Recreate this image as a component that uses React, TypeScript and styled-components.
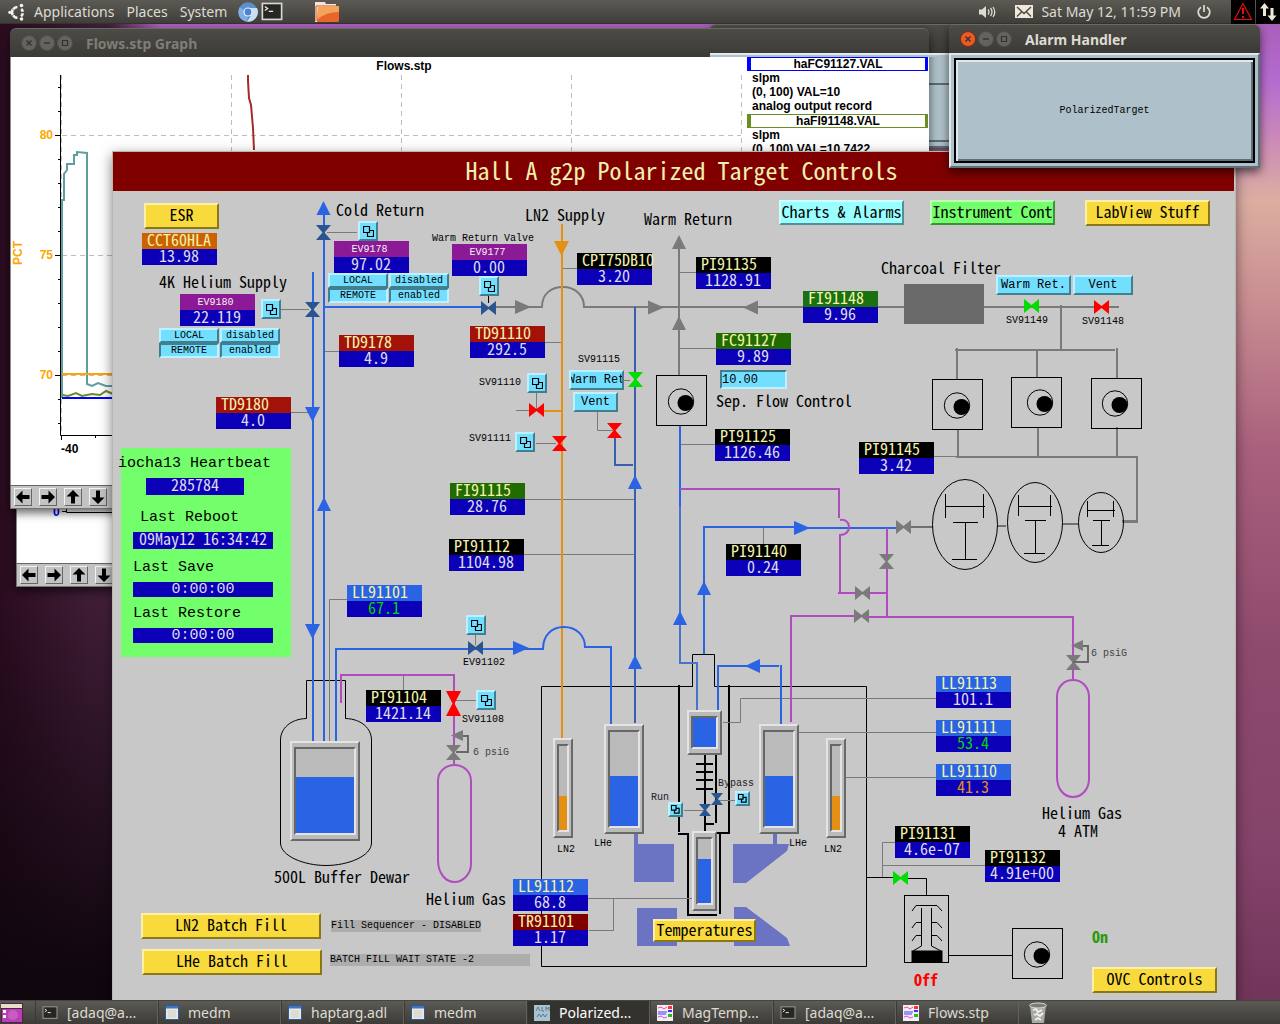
import React from "react";
import styled, { createGlobalStyle, css } from "styled-components";

/* ---------- palette and type ---------- */

const C = {
  face: "#c8c8c8",
  blue: "#2a63e4",
  steel: "#3a5fb0",
  mid: "#4a72cc",
  navy: "#2a5590",
  gray: "#7a7a7a",
  orange: "#e39014",
  purple: "#b04cc0",
  red: "#ff0000",
  green: "#00dd00",
  value: "#0b00b8",
  magnet: "#6b74c2",
};

const tall = `"Noto Sans Mono CJK JP", "Liberation Mono", monospace`;
const mono = `"Liberation Mono", monospace`;
const ui = `"Noto Sans", "Open Sans", sans-serif`;
const sans = `"Liberation Sans", Arial, sans-serif`;

/* The display's widgets are listed in screen coordinates. */
const ORIGIN_X = 113;
const ORIGIN_Y = 191;

const GlobalStyle = createGlobalStyle`
  html, body, #root { height: 100%; }
  body { margin: 0; overflow: hidden; }
  *, *::before, *::after { box-sizing: border-box; }
  button, input { margin: 0; padding: 0; border: 0; font: inherit; color: inherit; background: none; }
`;

/* ---------- desktop ---------- */

const Desktop = styled.div`
  display: flex;
  flex-direction: column;
  height: 100vh;
  min-height: 1024px;
  font-family: ${ui};
  font-size: 14px;
  background:
    linear-gradient(180deg, #0f060e00 600px, #0f060e 980px) 0 0 / 140px 100% no-repeat,
    linear-gradient(90deg, #2a0c1f 0, #43203a 110px, #43203a00 160px),
    linear-gradient(180deg, #a35bb0 0, #b46bd0 80px, #cf90b4 150px, #dcaea0 200px, #c98e92 300px, #a9607d 450px, #8e4a6d 650px, #84436a 850px, #6f3358 1024px);
`;

const Panel = styled.header`
  display: flex;
  align-items: center;
  flex: none;
  height: 24px;
  padding-left: 8px;
  color: #dfdbd2;
  background: linear-gradient(#5b5a54, #3f3e3a);
  border-bottom: 1px solid #33322e;
  position: relative;
  z-index: 5;
`;

const Menus = styled.nav`
  display: flex;
  padding: 0 5px 0 2px;
`;

const MenuButton = styled.button`
  padding: 0 6px;
  line-height: 22px;
  white-space: nowrap;
`;

const IconButton = styled.button<{ $ml?: number; $w: number; $dark?: boolean }>`
  display: flex;
  align-items: center;
  justify-content: center;
  width: ${(p) => p.$w}px;
  height: 24px;
  margin-left: ${(p) => p.$ml ?? 0}px;
  background: ${(p) => (p.$dark ? "#000" : "none")};
`;

const Tray = styled.div`
  display: flex;
  align-items: center;
  margin-left: auto;
`;

const Clock = styled.time`
  margin-left: 8px;
  white-space: nowrap;
  font-size: 14px;
`;

const Space = styled.main`
  position: relative;
  flex: 1;
`;

const Taskbar = styled.footer`
  display: flex;
  flex: none;
  height: 24px;
  color: #dfdbd2;
  background: linear-gradient(#5b5a54, #3c3b37);
  border-top: 1px solid #45443f;
  position: relative;
  z-index: 5;
`;

const Task = styled.button<{ $active?: boolean }>`
  display: flex;
  align-items: center;
  gap: 9px;
  width: 123px;
  padding-left: 6px;
  border-left: 1px solid #3a3935;
  border-right: 1px solid #62615b;
  line-height: 22px;
  white-space: nowrap;
  ${(p) => p.$active && css`background: #33322e; color: #fff;`}
`;

const Grip = styled.span`
  width: 11px;
`;

/* ---------- windows ---------- */

const Window = styled.section<{ $x: number; $y: number; $w: number; $h: number }>`
  position: absolute;
  left: ${(p) => p.$x}px;
  top: ${(p) => p.$y - 24}px;
  width: ${(p) => p.$w}px;
  height: ${(p) => p.$h}px;
  display: flex;
  flex-direction: column;
  border-radius: 6px 6px 0 0;
  box-shadow: 0 4px 10px rgba(0, 0, 0, 0.6);
`;

const TitleBar = styled.div<{ $active?: boolean }>`
  display: flex;
  align-items: center;
  flex: none;
  gap: 2px;
  height: 29px;
  padding-left: 11px;
  border-radius: 6px 6px 0 0;
  border-top: 1px solid #6a6963;
  background: linear-gradient(#4c4b45, #3b3a36);
  color: ${(p) => (p.$active ? "#dfdbd2" : "#807d78")};
  font-weight: 700;
  font-size: 14px;
  white-space: nowrap;
`;

const WinTitle = styled.h2`
  margin: 0 0 0 11px;
  font: inherit;
  font-weight: 700;
`;

const WinDot = styled.button<{ $close?: boolean }>`
  display: flex;
  width: 16px;
  height: 16px;
  border-radius: 8px;
  color: #33322e;
  background: ${(p) => (p.$close ? "#e95a25" : "#65635d")};
  border: 1px solid ${(p) => (p.$close ? "#7a2c10" : "#504e49")};
`;

const GraphBody = styled.div`
  display: flex;
  flex: 1;
  min-height: 0;
  overflow: hidden;
  background: #fff;
  border-left: 1px solid #8d8b87;
  font: bold 12px ${sans};
  color: #000;
`;

const GraphPlot = styled.div`
  flex: 1;
  min-width: 0;
`;

const Legend = styled.div`
  width: 182px;
  padding-right: 1px;
`;

const LegendName = styled.div<{ $c: string }>`
  height: 14px;
  line-height: 12px;
  text-align: center;
  border: solid ${(p) => p.$c};
  border-width: 1px 3px 1px 4px;
`;

const LegendText = styled.p`
  margin: 0 0 1px;
  padding: 0 0 0 5px;
  line-height: 14px;
  white-space: nowrap;
`;

const ArrowBar = styled.div`
  display: flex;
  align-items: center;
  flex: none;
  gap: 7px;
  height: 24px;
  padding-left: 3px;
  background: #c3c3c3;
  border: 1px solid #77756f;
  border-top-color: #666;
`;

const ArrowButton = styled.button`
  width: 18px;
  height: 18px;
  border: 1px solid;
  border-color: #f4f4f4 #666 #666 #f4f4f4;
  display: flex;
  align-items: center;
  justify-content: center;
`;

const MotifBody = styled.div`
  flex: 1;
  display: flex;
  padding: 4px;
  background: #aec0c9;
  border: 2px solid;
  border-color: #dfe8ec #5f6f78 #5f6f78 #dfe8ec;
`;

const MotifPane = styled.div`
  flex: 1;
  margin-top: 24px;
  border: 2px solid;
  border-color: #5f6a70 #5f6a70 #5f6a70 #dfe8ec;
`;

/* Top edge of the rear alarm window, repainted over the graph's title bar. */
const StrayEdge = styled.div`
  position: absolute;
  left: 710px;
  top: 29px;
  width: 240px;
  height: 4px;
  background: #aec0c9;
  border-top: 2px solid #dfe8ec;
`;

const AlarmButton = styled.button`
  flex: 1;
  margin: -1px;
  border: 2px solid #000;
  outline: 0;
  font: 10px ${mono};
  color: #000;
  box-shadow: inset 2px 2px 0 #dfe8ec, inset -2px -2px 0 #5f6f78;
`;

/* ---------- target display ---------- */

const MedmWindow = styled.section`
  position: absolute;
  left: 112px;
  top: 127px;
  width: 1124px;
  bottom: 0;
  display: flex;
  flex-direction: column;
  background: ${C.face};
  border: 1px solid #b9b6b2;
  border-bottom: 0;
  box-shadow: 0 4px 12px rgba(0, 0, 0, 0.5);
`;

const Banner = styled.h1`
  flex: none;
  height: 39px;
  margin: 0 1px 0 0;
  padding-left: 16px;
  text-align: center;
  font: 24px/36px ${tall};
  color: #f0f0b0;
  background: #800000;
`;

const Canvas = styled.div`
  position: relative;
  flex: 1;
`;

const Drawing = styled.svg`
  display: block;
  width: 1122px;
  height: 809px;
`;

const place = css<{ $x: number; $y: number }>`
  position: absolute;
  left: ${(p) => p.$x - ORIGIN_X}px;
  top: ${(p) => p.$y - ORIGIN_Y}px;
`;

const TagBox = styled.div`
  ${place}
  width: 75px;
  white-space: nowrap;
  font: 16px/13px ${tall};
`;

const TagName = styled.div<{ $bg: string; $small?: boolean }>`
  height: 16px;
  padding-left: 5px;
  background: ${(p) => p.$bg};
  color: #f2f2ac;
  ${(p) => p.$small && css`
    padding-left: 0;
    padding-right: 4px;
    text-align: center;
    color: #f4f4f4;
    font: 10px/17px ${mono};
  `}
`;

const TagValue = styled.output<{ $c?: string }>`
  display: block;
  height: 16px;
  padding-right: 1px;
  text-align: center;
  background: ${C.value};
  color: ${(p) => p.$c ?? "#dcdce8"};
`;

type LabelSize = "small" | "large" | "state";
const labelFont: Record<LabelSize, string> = {
  small: `10px/18px ${mono}`,
  large: `16px/12px ${tall}`,
  state: `bold 16px/12px ${tall}`,
};

const Label = styled.span<{ $size: LabelSize; $c?: string }>`
  ${place}
  white-space: nowrap;
  font: ${(p) => labelFont[p.$size]};
  color: ${(p) => p.$c ?? "#000"};
`;

const tones = {
  yellow: ["#f9da3c", "#fdf0a6", "#8a7718"],
  aqua: ["#99ffff", "#ccffff", "#558f8f"],
  lime: ["#73ff6b", "#b8ffb4", "#3f8f3a"],
  sky: ["#73dfff", "#bdf1ff", "#417f90"],
};
type Tone = keyof typeof tones;

const raised = css<{ $tone: Tone; $pressed?: boolean }>`
  background: ${(p) => tones[p.$tone][0]};
  border: 2px solid;
  border-color: ${(p) => {
    const [, light, dark] = tones[p.$tone];
    return p.$pressed ? `${dark} ${light} ${light} ${dark}` : `${light} ${dark} ${dark} ${light}`;
  }};
`;

const PushButton = styled.button<{ $x: number; $y: number; $w: number; $h: number; $tone: Tone; $mid?: boolean }>`
  ${place}
  ${raised}
  display: flex;
  align-items: center;
  justify-content: center;
  width: ${(p) => p.$w}px;
  height: ${(p) => p.$h}px;
  overflow: hidden;
  white-space: nowrap;
  color: #000;
  ${(p) => (p.$mid
    ? css`font: 12px/16px ${mono};`
    : css`padding-bottom: 4px; font: 16px/16px ${tall};`)}
`;

const RelatedButton = styled(PushButton)`
  padding: 0;
`;

const ChoiceGroup = styled.div`
  ${place}
  display: grid;
  grid-template-columns: 60px 60px;
  column-gap: 1px;
`;

const Choice = styled.button`
  ${raised}
  height: 15px;
  font: 10px/11px ${mono};
  color: #000;
`;

const Setpoint = styled.input`
  ${place}
  ${raised}
  width: 67px;
  height: 19px;
  font: 12px/14px ${mono};
`;

const StatusText = styled.output<{ $w: number }>`
  ${place}
  width: ${(p) => p.$w}px;
  height: 12px;
  font: 10px/11px ${mono};
  white-space: nowrap;
  background: #adadad;
  color: #000;
`;

const MeterFrame = styled.div<{ $x: number; $y: number; $w: number; $h: number }>`
  ${place}
  display: flex;
  width: ${(p) => p.$w}px;
  height: ${(p) => p.$h}px;
  padding: 4px 2px;
  background: #bababa;
  border: 2px solid;
  border-color: #e4e4e4 #696969 #696969 #e4e4e4;
`;

const MeterWell = styled.div`
  display: flex;
  align-items: flex-end;
  flex: 1;
  background: #bababa;
  border: 2px solid;
  border-color: #666 #e4e4e4 #e4e4e4 #666;
`;

const MeterFill = styled.div<{ $c: string }>`
  width: 100%;
  background: ${(p) => p.$c};
`;

const Heartbeat = styled.section`
  ${place}
  display: flex;
  flex-direction: column;
  align-items: flex-start;
  width: 170px;
  height: 209px;
  padding: 7px 12px;
  background: #73ff6b;
  color: #000;
  font: 15px/18px ${mono};
  white-space: nowrap;
`;

const BeatLabel = styled.span<{ $ml?: number; $mt?: number }>`
  margin-left: ${(p) => p.$ml ?? 0}px;
  margin-top: ${(p) => p.$mt ?? 0}px;
`;

const BeatValue = styled.output<{ $short?: boolean; $tall?: boolean }>`
  width: ${(p) => (p.$short ? 98 : 140)}px;
  height: ${(p) => (p.$tall ? 17 : 15)}px;
  margin-left: ${(p) => (p.$short ? 13 : 0)}px;
  margin-top: 5px;
  text-align: center;
  color: #dcdce8;
  background: ${C.value};
  font: ${(p) => (p.$tall ? `16px/13px ${tall}` : `15px/15px ${mono}`)};
`;

/* ---------- data ---------- */

const MAROON = "#a31208";
const GREEN = "#216c00";
const VIOLET = "#8c1a96";

type TagData = { x: number; y: number; name: string; value: string; bg: string; small?: boolean; c?: string };
const tags: TagData[] = [
  { x: 142, y: 233, name: "CCT60HLA", value: "13.98", bg: "#cd6100" },
  { x: 334, y: 241, name: "EV9178", value: "97.02", bg: VIOLET, small: true },
  { x: 180, y: 294, name: "EV9180", value: "22.119", bg: VIOLET, small: true },
  { x: 452, y: 244, name: "EV9177", value: "0.00", bg: VIOLET, small: true },
  { x: 339, y: 335, name: "TD9178", value: "4.9", bg: MAROON },
  { x: 216, y: 397, name: "TD9180", value: "4.0", bg: MAROON },
  { x: 470, y: 326, name: "TD91110", value: "292.5", bg: MAROON },
  { x: 577, y: 253, name: "CPI75DB10", value: "3.20", bg: "#000" },
  { x: 696, y: 257, name: "PI91135", value: "1128.91", bg: "#000" },
  { x: 803, y: 291, name: "FI91148", value: "9.96", bg: "#1b7010" },
  { x: 716, y: 333, name: "FC91127", value: "9.89", bg: GREEN },
  { x: 715, y: 429, name: "PI91125", value: "1126.46", bg: "#000" },
  { x: 450, y: 483, name: "FI91115", value: "28.76", bg: GREEN },
  { x: 449, y: 539, name: "PI91112", value: "1104.98", bg: "#000" },
  { x: 726, y: 544, name: "PI91140", value: "0.24", bg: "#000" },
  { x: 859, y: 442, name: "PI91145", value: "3.42", bg: "#000" },
  { x: 347, y: 585, name: "LL91101", value: "67.1", bg: C.blue, c: "#00d800" },
  { x: 366, y: 690, name: "PI91104", value: "1421.14", bg: "#000" },
  { x: 936, y: 676, name: "LL91113", value: "101.1", bg: C.blue },
  { x: 936, y: 720, name: "LL91111", value: "53.4", bg: C.blue, c: "#00d800" },
  { x: 936, y: 764, name: "LL91110", value: "41.3", bg: C.blue, c: C.orange },
  { x: 513, y: 879, name: "LL91112", value: "68.8", bg: C.blue },
  { x: 513, y: 914, name: "TR91101", value: "1.17", bg: "#800000" },
  { x: 895, y: 826, name: "PI91131", value: "4.6e-07", bg: "#000" },
  { x: 985, y: 850, name: "PI91132", value: "4.91e+00", bg: "#000" },
];

type LabelData = [number, number, string, LabelSize, string?];
const labels: LabelData[] = [
  [336, 203, "Cold Return", "large"],
  [159, 275, "4K Helium Supply", "large"],
  [525, 208, "LN2 Supply", "large"],
  [644, 212, "Warm Return", "large"],
  [881, 261, "Charcoal Filter", "large"],
  [716, 394, "Sep. Flow Control", "large"],
  [274, 870, "500L Buffer Dewar", "large"],
  [426, 892, "Helium Gas", "large"],
  [1042, 806, "Helium Gas", "large"],
  [1058, 824, "4 ATM", "large"],
  [432, 230, "Warm Return Valve", "small"],
  [578, 351, "SV91115", "small"],
  [479, 374, "SV91110", "small"],
  [469, 430, "SV91111", "small"],
  [463, 654, "EV91102", "small"],
  [462, 711, "SV91108", "small"],
  [1006, 312, "SV91149", "small"],
  [1082, 313, "SV91148", "small"],
  [473, 744, "6 psiG", "small", "#444"],
  [1091, 645, "6 psiG", "small", "#444"],
  [651, 789, "Run", "small", "#222"],
  [718, 775, "Bypass", "small", "#222"],
  [594, 835, "LHe", "small"],
  [557, 841, "LN2", "small"],
  [789, 835, "LHe", "small"],
  [824, 841, "LN2", "small"],
  [914, 973, "Off", "state", "#ff0000"],
  [1092, 930, "On", "state", "#2b9a0b"],
];

type ButtonData = { x: number; y: number; w: number; h: number; text: string; tone: Tone; mid?: boolean };
const buttons: ButtonData[] = [
  { x: 144, y: 203, w: 75, h: 26, text: "ESR", tone: "yellow" },
  { x: 779, y: 200, w: 125, h: 25, text: "Charts & Alarms", tone: "aqua" },
  { x: 930, y: 200, w: 125, h: 25, text: "Instrument Cont", tone: "lime" },
  { x: 1085, y: 200, w: 125, h: 26, text: "LabView Stuff", tone: "yellow" },
  { x: 141, y: 913, w: 180, h: 26, text: "LN2 Batch Fill", tone: "yellow" },
  { x: 142, y: 949, w: 180, h: 26, text: "LHe Batch Fill", tone: "yellow" },
  { x: 653, y: 919, w: 103, h: 23, text: "Temperatures", tone: "yellow" },
  { x: 1092, y: 967, w: 125, h: 26, text: "OVC Controls", tone: "yellow" },
  { x: 996, y: 275, w: 75, h: 20, text: "Warm Ret.", tone: "sky", mid: true },
  { x: 1073, y: 275, w: 60, h: 20, text: "Vent", tone: "sky", mid: true },
  { x: 569, y: 370, w: 55, h: 20, text: "Warm Ret", tone: "sky", mid: true },
  { x: 573, y: 392, w: 45, h: 20, text: "Vent", tone: "sky", mid: true },
];

const related: [number, number, number, string][] = [
  [358, 221, 20, "EV9178 details"],
  [261, 299, 20, "EV9180 details"],
  [479, 276, 20, "EV9177 details"],
  [527, 373, 20, "SV91110 details"],
  [515, 432, 20, "SV91111 details"],
  [466, 615, 20, "EV91102 details"],
  [476, 690, 20, "SV91108 details"],
  [668, 802, 15, "Run valve details"],
  [735, 791, 15, "Bypass valve details"],
];

type MeterData = { x: number; y: number; w: number; h: number; level: number; c: string; name: string };
const meters: MeterData[] = [
  { x: 290, y: 741, w: 70, h: 100, level: 67, c: C.blue, name: "Buffer dewar" },
  { x: 553, y: 738, w: 20, h: 100, level: 41, c: C.orange, name: "LN2 left" },
  { x: 604, y: 724, w: 40, h: 110, level: 53, c: C.blue, name: "LHe left" },
  { x: 687, y: 710, w: 35, h: 45, level: 100, c: C.blue, name: "Separator" },
  { x: 759, y: 724, w: 40, h: 110, level: 53, c: C.blue, name: "LHe right" },
  { x: 826, y: 738, w: 20, h: 100, level: 41, c: C.orange, name: "LN2 right" },
  { x: 692, y: 831, w: 25, h: 80, level: 69, c: C.blue, name: "Nose" },
];

/* ---------- drawing primitives ---------- */

type Pt = { x: number; y: number };
const Wire = ({ d, c = C.gray, w = 1 }: { d: string; c?: string; w?: number }) => (
  <path d={d} fill="none" stroke={c} strokeWidth={w} />
);
/* Valve bodies: x,y is the top-left corner of the symbol. */
const ValveH = ({ x, y, c = C.gray }: Pt & { c?: string }) => (
  <path d={`M${x} ${y}L${x + 7.5} ${y + 6}L${x + 15} ${y}V${y + 14}L${x + 7.5} ${y + 8}L${x} ${y + 14}Z`} fill={c} />
);
const ValveV = ({ x, y, c = C.gray, w = 15, h = 15 }: Pt & { c?: string; w?: number; h?: number }) => (
  <path
    d={`M${x} ${y}H${x + w}L${x + w / 2 + 1} ${y + h / 2}L${x + w} ${y + h}H${x}L${x + w / 2 - 1} ${y + h / 2}Z`}
    fill={c}
  />
);
const Up = ({ x, y, c = C.blue }: Pt & { c?: string }) => <path d={`M${x - 7} ${y + 14}L${x} ${y}L${x + 7} ${y + 14}Z`} fill={c} />;
const Down = ({ x, y, c = C.blue }: Pt & { c?: string }) => <path d={`M${x - 7.5} ${y}H${x + 7.5}L${x} ${y + 15}Z`} fill={c} />;
const Right = ({ x, y, c = C.blue }: Pt & { c?: string }) => <path d={`M${x} ${y - 7}L${x + 16} ${y}L${x} ${y + 7}Z`} fill={c} />;
const Left = ({ x, y, c = C.blue }: Pt & { c?: string }) => <path d={`M${x} ${y}L${x + 15} ${y - 7}V${y + 7}Z`} fill={c} />;

const Pump = ({ x, y, dx = 0, dy = 0 }: Pt & { dx?: number; dy?: number }) => (
  <g>
    <rect x={x + 0.5} y={y + 0.5} width={50} height={50} fill="none" stroke="#000" />
    <circle cx={x + 25 + dx} cy={y + 26.5 + dy} r={12.7} fill="none" stroke="#000" />
    <circle cx={x + 29.5 + dx} cy={y + 28 + dy} r={8} fill="#000" />
  </g>
);

const Diagram = () => (
  <Drawing viewBox={`${ORIGIN_X} ${ORIGIN_Y} 1122 809`} aria-hidden="true">
    {/* magnet coils */}
    <g fill={C.magnet}>
      <path d="M634 834h4v10h-4zM634 844h40v38h-40zM637 908h40v38h-40zM773 834h4v10h-4z" />
      <path d="M733 844H789L787 851L746 883H733ZM734 907H746L787 938L790 946H734Z" />
    </g>

    {/* buffer dewar, cryostat and vacuum space */}
    <Wire c="#000" d="M345.5 718.5V680.5H306.5V718.5C290 719 280.5 729 280.5 740V843C280.5 856 304 865.5 326 865.5S371.5 856 371.5 843V740C371.5 729 362 719 345.5 718.5" />
    <Wire c="#000" d="M692.5 686.5H541.5V966.5H866.5V686.5H714.5M692.5 687V654.5H714.5V686.5" />
    <Wire c="#000" w={2} d="M679 685V832M678 834H688V914M729 685V833H717M720 832V914M687 915H717" />
    <Wire c="#000" w={2} d="M705 755V831M716 755V823M705 824H714M696 764H713M696 772H713M696 780H713M696 789H713" />

    {/* instrument leads */}
    <Wire d="M327 232.5H357M281 309.5H309M325 351.5H339M291 412.5H308M347 599.5H329.5V741M562 268.5H577M545 342.5H561M680 272.5H696M680 348.5H716M680 444.5H715M516 410.5H529M536.5 393V409M536 443.5H556M624 380.5H630M597.5 412V430.5H613M525 499.5H635M523 554.5H635M475.5 635V645M763.5 528V544M934 456.5H957M403.5 675V690M454 700.5H476M723 722.5H740.5V698.5H936M799 732.5H936M846 777.5H936M588 898.5H692M613.5 898V930.5H589M684 810.5H704M717 800.5H735M882.5 877V842.5H895M882 865.5H985" />
    <Wire c="#000" d="M488.5 296V303M866 877.5H893M908 878.5H926.5V895M949 955.5H1012" />

    {/* warm return header */}
    <Wire w={2} d="M496 307H542C542 294 551 287 563 287S584 295 584 307H904M984 307H1119M679 248V376" />
    <Wire w={2} d="M1061 305V350M955 350H1115M957 348V379M1037 350V378M1117 348V378M958 429V457M1038 427V457M1117 427V457M956 457H1137V522" />
    <Wire w={2} c="#707070" d="M911 527H933M997 526H1006M1063 524H1078" />
    <Wire w={3} d="M1122 521.500H1138" />
    <rect x={904} y={284} width={80} height={40} fill="#696969" />

    {/* liquid nitrogen */}
    <Wire c={C.orange} w={2} d="M562 224V738M544 411H562" />

    {/* helium supply and cold return */}
    <Wire c={C.blue} w={2} d="M313 272V741M324 210V741M325 307H481M336 741V649H543C543 636 551 627 564 627S585 636 585 647H611V724" />
    <Wire c={C.steel} w={2} d="M635 307V723M615 437V465H633" />
    <Wire c={C.blue} w={2} d="M680 426V506M704 654V527H794M794 528H896M718 710V666H779M781 665V724" />
    <Wire c={C.mid} w={2} d="M680 506V663H697V710" />

    {/* warm gas */}
    <Wire c={C.purple} w={2} d="M680 489H839V518M840 520C845 519 849 522 849 527S845 535 840 535V592M838 593H856M870 593H887M887 528V554M887 568V617M854 616H791V722M869 617H1073V680M341 703V675H454V764" />
    <Wire c={C.purple} w={2} d="M438 860V781C438 771 446 765 454.500 765S471 771 471 781V864C471 874 463 882 454.500 882S438 874 438 860" />
    <Wire c={C.purple} w={2} d="M1057 777V697C1057 687 1064 680 1073 680S1089 687 1089 697V779C1089 789 1082 797 1073 797S1057 789 1057 777" />

    {/* flow arrows */}
    <Up x={323.5} y={201} />
    <Up x={324} y={497} />
    <Down x={312.5} y={407} />
    <Down x={312.5} y={624} />
    <Down x={561.5} y={241} c={C.orange} />
    <Right x={515} y={307} c={C.gray} />
    <Right x={648} y={307.5} c={C.gray} />
    <Left x={743} y={307.5} c={C.gray} />
    <Up x={679} y={235} c={C.gray} />
    <Up x={679} y={316} c={C.gray} />
    <Up x={635} y={475} />
    <Up x={635} y={655} />
    <Up x={680} y={611} />
    <Up x={704} y={581} />
    <Right x={794} y={528} />
    <Right x={513} y={648} />
    <Left x={745} y={666} />

    {/* valves */}
    <ValveV x={316} y={225} c={C.navy} />
    <ValveV x={305} y={302} c={C.navy} />
    <ValveH x={481} y={301} c={C.navy} />
    <ValveH x={468} y={641} c={C.navy} />
    <ValveV x={699} y={804} w={12} h={12} c={C.navy} />
    <ValveV x={711} y={793} w={12} h={12} c={C.navy} />
    <ValveH x={529} y={403} c={C.red} />
    <ValveV x={552} y={436} c={C.red} />
    <ValveV x={607} y={423} c={C.red} />
    <ValveV x={628} y={372} c={C.green} />
    <ValveH x={1024} y={299} c={C.green} />
    <ValveH x={1094} y={300} c={C.red} />
    <ValveV x={446} y={691} h={25} c={C.red} />
    <ValveH x={893} y={871} c={C.green} />
    <ValveH x={896} y={520} />
    <ValveV x={879} y={554} />
    <ValveH x={855} y={586} />
    <ValveH x={854} y={609} />
    <ValveV x={446} y={745} />
    <ValveV x={1066} y={655} />

    {/* relief regulators */}
    <path d="M451 735.500L463 730V741ZM1071 645.500L1083 640V651Z" fill={C.gray} />
    <Wire c="#696969" w={2} d="M463 736H468V752H456M1083 646H1088V662H1073" />

    {/* pumps */}
    <Pump x={656} y={375} />
    <Pump x={932} y={379} />
    <Pump x={1011} y={377} dx={4} dy={-1} />
    <Pump x={1091} y={378} dx={-1} dy={-1} />
    <Pump x={1012} y={928} />

    {/* roots blowers */}
    <g fill="none" stroke="#000">
      <ellipse cx={965} cy={524.5} rx={32.5} ry={45} />
      <ellipse cx={1035} cy={522.5} rx={27.5} ry={40} />
      <ellipse cx={1101} cy={522.5} rx={22.5} ry={30} />
      <path d="M945.500 494V518M983.500 494V518M946 506.500H985M953 522.500H978M965.500 522V559M952 559.500H977" />
      <path d="M1018.500 495V516M1050.500 495V516M1018 506.500H1052M1025 520.500H1046M1035.500 520V553M1024 553.500H1045" />
      <path d="M1087.500 501V517M1113.500 501V517M1087 510.500H1115M1093 520.500H1110M1101.500 520V545M1092 545.500H1109" />
    </g>

    {/* turbo pump */}
    <g fill="none" stroke="#000">
      <rect x={904.5} y={895.5} width={44} height={67} />
      <path d="M912 911L916 905.500H937L942 911M921.500 908V946L913 951M931.500 908V946L941 951" />
      <path d="M921 922.500H916L912 928M931 922.500H937L942 928M921 935.500H916L912 941M931 935.500H937L942 941" />
      <rect x={912} y={951} width={30} height={11} fill="#000" />
    </g>
  </Drawing>
);

const Tag = ({ t }: { t: TagData }) => (
  <TagBox $x={t.x} $y={t.y}>
    <TagName $bg={t.bg} $small={t.small}>{t.name}</TagName>
    <TagValue $c={t.c}>{t.value}</TagValue>
  </TagBox>
);

const LocalRemote = ({ x, y }: Pt) => (
  <ChoiceGroup $x={x} $y={y}>
    <Choice $tone="sky">LOCAL</Choice>
    <Choice $tone="sky">disabled</Choice>
    <Choice $tone="sky" $pressed>REMOTE</Choice>
    <Choice $tone="sky" $pressed>enabled</Choice>
  </ChoiceGroup>
);

const TargetDisplay = () => (
  <MedmWindow>
    <Banner>Hall A g2p Polarized Target Controls</Banner>
    <Canvas>
      <Diagram />
      <Heartbeat $x={121} $y={448}>
        <BeatLabel $ml={-15}>iocha13 Heartbeat</BeatLabel>
        <BeatValue $short $tall>285784</BeatValue>
        <BeatLabel $ml={7} $mt={14}>Last Reboot</BeatLabel>
        <BeatValue $tall>09May12 16:34:42</BeatValue>
        <BeatLabel $mt={10}>Last Save</BeatLabel>
        <BeatValue>0:00:00</BeatValue>
        <BeatLabel $mt={8}>Last Restore</BeatLabel>
        <BeatValue>0:00:00</BeatValue>
      </Heartbeat>
      {meters.map((m) => (
        <MeterFrame key={m.name} $x={m.x} $y={m.y} $w={m.w} $h={m.h} role="meter" aria-label={m.name} aria-valuenow={m.level}>
          <MeterWell>
            <MeterFill $c={m.c} style={{ height: `${m.level}%` }} />
          </MeterWell>
        </MeterFrame>
      ))}
      {tags.map((t) => <Tag key={t.name} t={t} />)}
      {labels.map(([x, y, text, size, c]) => (
        <Label key={`${text}${x}`} $x={x} $y={y} $size={size} $c={c}>{text}</Label>
      ))}
      {buttons.map((b) => (
        <PushButton key={`${b.text}${b.x}`} $x={b.x} $y={b.y} $w={b.w} $h={b.h} $tone={b.tone} $mid={b.mid}>{b.text}</PushButton>
      ))}
      {related.map(([x, y, s, name]) => (
        <RelatedButton key={name} $x={x} $y={y} $w={s} $h={s} $tone="sky" aria-label={name}>
          <svg width={s / 2 + 1} height={s / 2 + 1} viewBox="0 0 11 11" fill="none" stroke="#000" strokeWidth={s < 20 ? 1.6 : 1.2}>
            <path d="M0.500 0.500h6v6h-6zM6.500 4.500h4v6h-6v-4" />
          </svg>
        </RelatedButton>
      ))}
      <LocalRemote x={328} y={273} />
      <LocalRemote x={159} y={328} />
      <Setpoint $x={720} $y={370} $tone="sky" $pressed aria-label="Separator flow setpoint" defaultValue="10.00" />
      <StatusText $x={331} $y={920} $w={150}>Fill Sequencer - DISABLED</StatusText>
      <StatusText $x={330} $y={954} $w={200}>BATCH FILL WAIT STATE -2</StatusText>
    </Canvas>
  </MedmWindow>
);

/* ---------- other windows ---------- */

const WindowDots = ({ active }: { active?: boolean }) => (
  <>
    <WinDot $close={active} aria-label="Close">
      <svg width="14" height="14" viewBox="0 0 14 14" stroke="currentColor" strokeWidth="1.4"><path d="M4.500 4.500l5 5M9.500 4.500l-5 5" /></svg>
    </WinDot>
    <WinDot aria-label="Minimize">
      <svg width="14" height="14" viewBox="0 0 14 14" stroke="currentColor" strokeWidth="1.4"><path d="M4 7h6" /></svg>
    </WinDot>
    <WinDot aria-label="Maximize">
      <svg width="14" height="14" viewBox="0 0 14 14" fill="none" stroke="currentColor" strokeWidth="1.2"><path d="M4.500 4.500h5v5h-5z" /></svg>
    </WinDot>
  </>
);

const turns = [
  ["Left", 0],
  ["Right", 180],
  ["Up", 90],
  ["Down", 270],
] as const;

const Arrows = () => (
  <ArrowBar>
    {turns.map(([name, turn]) => (
      <ArrowButton key={name} aria-label={name}>
        <svg width="16" height="16" viewBox="0 0 16 16">
          <path transform={`rotate(${turn} 8 8)`} d="M1 8L7.500 1.500V6H14.500V10H7.500V14.500Z" fill="#000" />
        </svg>
      </ArrowButton>
    ))}
  </ArrowBar>
);

const FlowsWindow = () => (
  <Window $x={10} $y={28} $w={919} $h={481}>
    <TitleBar>
      <WindowDots />
      <WinTitle>Flows.stp Graph</WinTitle>
    </TitleBar>
    <GraphBody>
      <GraphPlot>
        <svg width="736" height="428" viewBox="11 57 736 428">
          <g fill="none" strokeWidth="1">
            <path stroke="#bdbdbd" strokeDasharray="5 4" d="M61.500 75V435M231.500 75V435M401.500 75V435M571.500 75V435M741.500 75V435M62 135.500H741M62 255.500H741M62 375.500H741" />
            <path stroke="#000" d="M60.500 75V435.500H741M61.500 435V440M95.500 435V438M58 87.500h3M58 111.500h3M55 135.500h6M58 159.500h3M58 183.500h3M58 207.500h3M58 231.500h3M55 255.500h6M58 279.500h3M58 303.500h3M58 327.500h3M58 351.500h3M55 375.500h6M58 399.500h3M58 423.500h3" />
          </g>
          <g fill="none" strokeWidth="2">
            <path stroke="#a52a2a" d="M248 75V81L249 98L251 105L253 128L254 150" />
            <path stroke="#5f9ea0" d="M62 398V200H64V174L67 170V164H74V155H77V152L87 153V384L92 386L98 383L106 386H113" />
            <path stroke="#ffa500" d="M62 374H113" />
            <path stroke="#0000ff" d="M62 398H113" />
            <path stroke="#6b8e23" d="M62 395L68 396L76 393L82 396L92 394L100 395L106 391L113 394" />
          </g>
          <g fontFamily={sans} fontSize="12" fontWeight="bold">
            <text x="404" y="70" textAnchor="middle">Flows.stp</text>
            <g fill="#ffa500">
              <text x="53" y="139" textAnchor="end">80</text>
              <text x="53" y="259" textAnchor="end">75</text>
              <text x="53" y="379" textAnchor="end">70</text>
              <text transform="translate(22 265) rotate(-90)">PCT</text>
            </g>
            <text x="61" y="453">-40</text>
          </g>
        </svg>
      </GraphPlot>
      <Legend>
        <LegendName $c="#0000ff">haFC91127.VAL</LegendName>
        <LegendText>slpm<br />(0, 100) VAL=10<br />analog output record</LegendText>
        <LegendName $c="#6b8e23">haFI91148.VAL</LegendName>
        <LegendText>slpm<br />(0, 100) VAL=10.7422</LegendText>
      </Legend>
    </GraphBody>
    <Arrows />
  </Window>
);

const BackGraphWindow = () => (
  <Window $x={16} $y={60} $w={600} $h={527}>
    <TitleBar />
    <GraphBody>
      <svg width="120" height="473" viewBox="17 89 120 473" fontFamily={sans} fontSize="12" fontWeight="bold">
        <text x="53" y="516" fill="#0000ff">0</text>
        <path d="M62 511.500H66M66.500 509V512.500H137" stroke="#000" fill="none" />
      </svg>
    </GraphBody>
    <Arrows />
  </Window>
);

const AlarmBackWindow = () => (
  <Window $x={710} $y={24} $w={270} $h={124}>
    <TitleBar />
    <MotifBody>
      <MotifPane />
    </MotifBody>
  </Window>
);

const AlarmWindow = () => (
  <Window $x={949} $y={24} $w={311} $h={144}>
    <TitleBar $active>
      <WindowDots active />
      <WinTitle>Alarm Handler</WinTitle>
    </TitleBar>
    <MotifBody>
      <AlarmButton>PolarizedTarget</AlarmButton>
    </MotifBody>
  </Window>
);

/* ---------- panel icons ---------- */

const UbuntuIcon = () => (
  <svg width="18" height="18" viewBox="0 0 18 18" fill="none" stroke="#f2f1ee" strokeWidth="2.600">
    <path d="M5.200 6.300A5 5 0 0 1 9.400 4M13.200 6A5.200 5.200 0 0 1 14.800 8.800M14.800 10.200A5.200 5.200 0 0 1 13 13.200M9.500 14.800A5 5 0 0 1 5.200 12.300M4.800 6.500A5 5 0 0 0 4.800 12" />
    <g fill="#f2f1ee" stroke="none"><circle cx="1.800" cy="9.300" r="1.600" /><circle cx="13.500" cy="2.500" r="1.800" /><circle cx="13.500" cy="16" r="1.800" /></g>
  </svg>
);
const ChromiumIcon = () => (
  <svg width="20" height="20" viewBox="0 0 20 20">
    <circle cx="10" cy="10" r="9.700" fill="#5b8fce" />
    <path d="M10 10L1.600 5.200A9.700 9.700 0 0 0 9 19.700Z" fill="#7fb0e4" />
    <path d="M10 6H19A9.700 9.700 0 0 1 9 19.700L14 12Z" fill="#c9dff4" />
    <circle cx="10" cy="10" r="4.600" fill="#e6f0fa" />
    <circle cx="10" cy="10" r="3.400" fill="#4a84cf" />
  </svg>
);
const TerminalIcon = ({ size = 20 }: { size?: number }) => (
  <svg width={size} height={size} viewBox="0 0 20 20">
    <rect x="0.500" y="1.500" width="19" height="16" fill={size > 16 ? "#d8d8d4" : "#8a8984"} />
    <rect x="2" y="3" width="16" height="13" fill="#262623" />
    <path d="M3.500 5l2.500 1.800L3.500 8.600M7 9.500h4" stroke="#eee" fill="none" strokeWidth="1.200" />
  </svg>
);
const FolderIcon = () => (
  <svg width="26" height="22" viewBox="0 0 26 22">
    <path d="M1 1H11L12 3H22V21H1Z" fill="#f3e3d8" />
    <path d="M2 20V5H22" fill="none" stroke="#cf5a2a" />
    <path d="M4 5H25V20Q25 21 23 21H3Z" fill="#e9662a" />
    <path d="M4 5H25V11Q12 11 4 18Z" fill="#f3a35c" />
  </svg>
);
const SpeakerIcon = () => (
  <svg width="18" height="16" viewBox="0 0 18 16" fill="#dfdbd2">
    <path d="M1 5.500H4L8 2V14L4 10.500H1Z" />
    <path d="M10 5.500Q12 8 10 10.500M12.500 4Q15.500 8 12.500 12M15 3Q18.500 8 15 13" fill="none" stroke="#dfdbd2" strokeWidth="1.300" />
  </svg>
);
const MailIcon = () => (
  <svg width="18" height="13" viewBox="0 0 18 13">
    <rect width="18" height="13" fill="#efe9d8" />
    <path d="M2 2l7 6.500L16 2M2 11.500l4.500-4.500M16 11.500l-4.500-4.500" stroke="#4a4944" fill="none" strokeWidth="1.400" />
  </svg>
);
const PowerIcon = () => (
  <svg width="16" height="16" viewBox="0 0 16 16" fill="none" stroke="#dfdbd2" strokeWidth="1.700">
    <path d="M5 3.200A5.800 5.800 0 1 0 11 3.200M8 1V8" />
  </svg>
);
const AlertIcon = () => (
  <svg width="20" height="19" viewBox="0 0 20 19" fill="none" stroke="#e80c0c" strokeWidth="1.200">
    <path d="M10 1.500L18.500 17.500H1.500Z" /><path d="M10 6V12M10 14V16" strokeWidth="2" />
  </svg>
);
const NetIcon = () => (
  <svg width="20" height="20" viewBox="0 0 20 20" fill="#efe9d8">
    <path d="M6.500 1L11 6.500H8V14H5V6.500H2ZM14 19L9.500 13.500H12.500V6H15.500V13.500H18.500Z" />
  </svg>
);
const DeskIcon = () => (
  <svg width="22" height="20" viewBox="0 0 22 20">
    <rect width="22" height="20" fill="#55204f" />
    <rect y="1" width="21" height="4" fill="#e6dfc8" />
    <rect x="1" y="6" width="20" height="13" fill="#b83fb4" />
    <path d="M2 7h3v3H2zM2 12h3v3H2z" fill="#fff" />
    <circle cx="12" cy="12" r="5" fill="#c95cc2" />
  </svg>
);
const FormIcon = () => (
  <svg width="14" height="15" viewBox="0 0 14 15">
    <rect x="0.500" y="0.500" width="13" height="14" fill="#eceae4" stroke="#2d5c9c" />
    <rect x="1" y="1" width="12" height="2.500" fill="#3f76bd" />
    <rect x="2.500" y="5" width="9" height="8" fill="#dedcd2" />
  </svg>
);
const AlarmIcon = () => (
  <svg width="16" height="16" viewBox="0 0 16 16">
    <rect width="16" height="16" fill="#a8c4d2" />
    <path d="M2 6L4 2L6 6M8 2V6H10M12 6V2L13.500 4L15 2V6M3 12l2-3 2 3 2-3 2 3 2-3" stroke="#5d7b89" fill="none" />
  </svg>
);
const ChartIcon = () => (
  <svg width="16" height="16" viewBox="0 0 16 16">
    <rect width="16" height="16" fill="#f2eef2" />
    <path d="M11 1h4v3h-4z" fill="#f33" /><path d="M11 5h4v2h-4z" fill="#33f" /><path d="M11 9h4v3h-4z" fill="#2b2" />
    <path d="M1 3l3-1 3 2 3-2" stroke="#f49" fill="none" /><path d="M1 7h9M1 9h8" stroke="#77f" fill="none" strokeWidth="1.500" />
    <path d="M1 12l3-1 3 2 3-1" stroke="#e4e" fill="none" />
  </svg>
);
const TrashIcon = () => (
  <svg width="20" height="22" viewBox="0 0 20 22">
    <path d="M2 3H18L16 21H4Z" fill="#a9aaa6" />
    <ellipse cx="10" cy="3.500" rx="8.500" ry="2.500" fill="#7b7c78" stroke="#d8d8d4" />
    <path d="M5 8l3-1 2 3 4-2M6 13l3-1 3 2 3-3M7 18l3-2 3 2" stroke="#f2f2ee" fill="none" strokeWidth="1.800" />
  </svg>
);

const tasks: { text: string; icon: React.ReactNode; active?: boolean }[] = [
  { text: "[adaq@a...", icon: <TerminalIcon size={16} /> },
  { text: "medm", icon: <FormIcon /> },
  { text: "haptarg.adl", icon: <FormIcon /> },
  { text: "medm", icon: <FormIcon /> },
  { text: "Polarized...", icon: <AlarmIcon />, active: true },
  { text: "MagTemp...", icon: <ChartIcon /> },
  { text: "[adaq@a...", icon: <TerminalIcon size={16} /> },
  { text: "Flows.stp", icon: <ChartIcon /> },
];

export default function App() {
  return (
    <>
      <GlobalStyle />
      <Desktop>
        <Panel>
          <UbuntuIcon />
          <Menus>
            <MenuButton>Applications</MenuButton>
            <MenuButton>Places</MenuButton>
            <MenuButton>System</MenuButton>
          </Menus>
          <IconButton $w={20} aria-label="Web browser"><ChromiumIcon /></IconButton>
          <IconButton $w={22} $ml={3} aria-label="Terminal"><TerminalIcon size={22} /></IconButton>
          <IconButton $w={26} $ml={31} aria-label="Home folder"><FolderIcon /></IconButton>
          <Tray>
            <IconButton $w={18} aria-label="Volume"><SpeakerIcon /></IconButton>
            <IconButton $w={18} $ml={19} aria-label="Messages"><MailIcon /></IconButton>
            <Clock>Sat May 12, 11:59 PM</Clock>
            <IconButton $w={16} $ml={15} aria-label="Shut down"><PowerIcon /></IconButton>
            <IconButton $w={24} $ml={19} $dark aria-label="Alarm"><AlertIcon /></IconButton>
            <IconButton $w={24} $ml={1} $dark aria-label="Network"><NetIcon /></IconButton>
          </Tray>
        </Panel>
        <Space>
          <BackGraphWindow />
          <AlarmBackWindow />
          <FlowsWindow />
          <StrayEdge />
          <TargetDisplay />
          <AlarmWindow />
        </Space>
        <Taskbar>
          <IconButton $w={24} aria-label="Show desktop"><DeskIcon /></IconButton>
          <Grip />
          {tasks.map((t, i) => (
            <Task key={i} $active={t.active}>
              {t.icon}
              {t.text}
            </Task>
          ))}
          <IconButton $w={26} $ml={6} aria-label="Trash"><TrashIcon /></IconButton>
        </Taskbar>
      </Desktop>
    </>
  );
}
